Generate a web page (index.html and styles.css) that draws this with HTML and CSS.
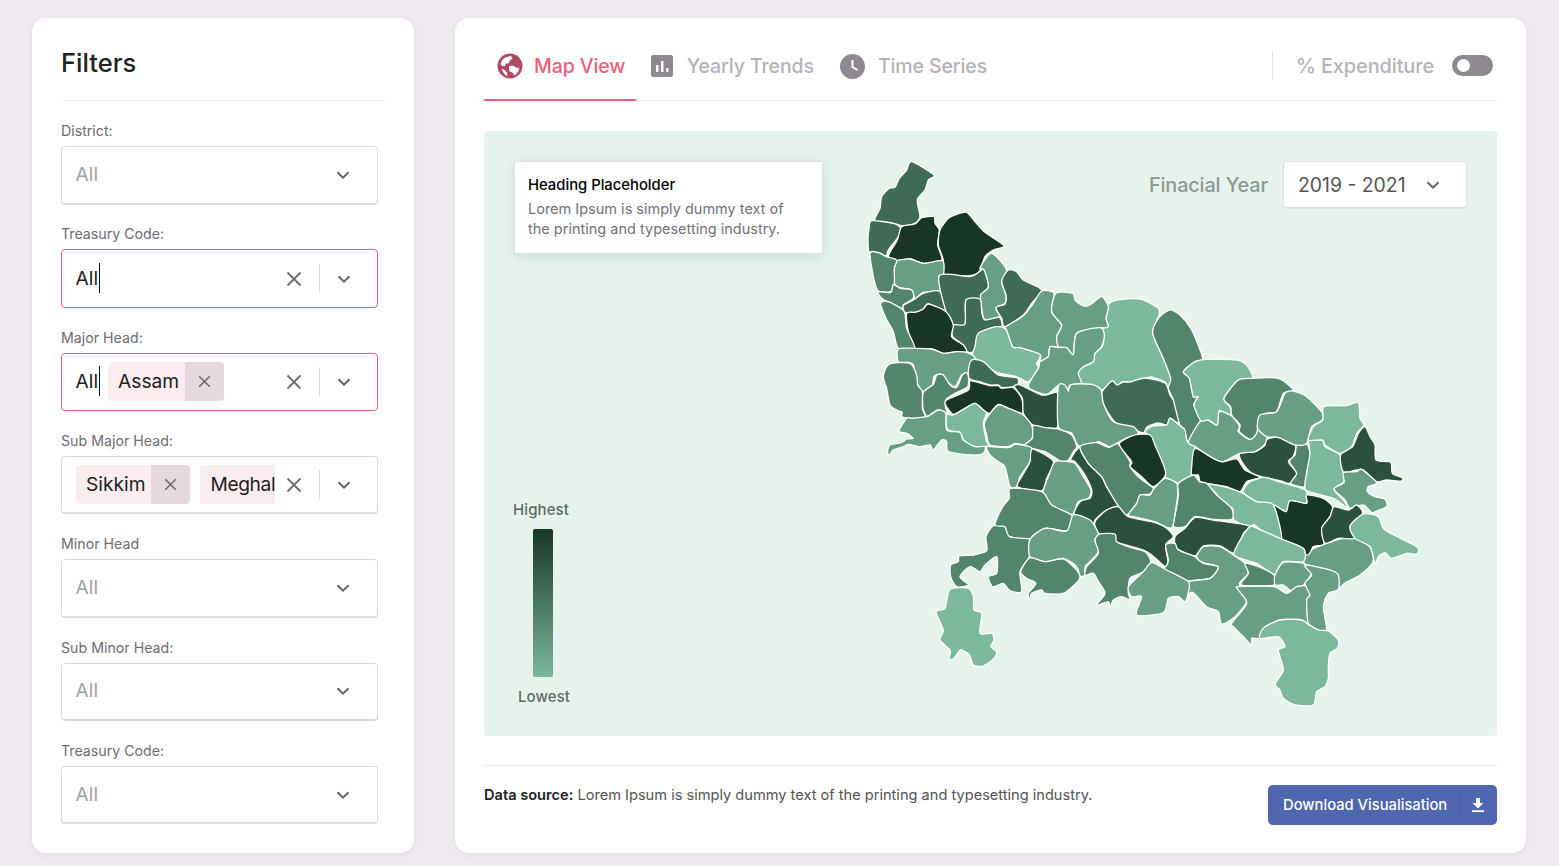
FILE: index.html
```html
<!DOCTYPE html>
<html lang="en">
<head>
    <meta charset="UTF-8">
    <meta name="viewport" content="width=device-width, initial-scale=1.0">
    <title>Expenditure Map</title>
    <link rel="stylesheet" href="styles.css">
</head>
<body>
    <svg class="icon-defs" width="0" height="0">
        <symbol id="chevron" viewBox="0 0 14 14"><path d="M1.5 4.2 7 9.7l5.5-5.5" fill="none" stroke="currentColor" stroke-width="2"/></symbol>
        <symbol id="cross" viewBox="0 0 16 16"><path d="M1.5 1.5l13 13M14.5 1.5l-13 13" fill="none" stroke="currentColor" stroke-width="1.8"/></symbol>
    </svg>

    <aside class="sidebar">
        <h2 class="sidebar-title">Filters</h2>
        <div class="filter-area">
            <div class="filter-list">
                <div class="field">
                    <label>District:</label>
                    <div class="select">
                        <span class="placeholder">All</span>
                        <svg class="chevron"><use href="#chevron"/></svg>
                    </div>
                </div>
                <div class="field">
                    <label>Treasury Code:</label>
                    <div class="select is-active">
                        <div class="select-value"><span class="typed">All</span></div>
                        <svg class="clear"><use href="#cross"/></svg>
                        <i class="select-divider"></i>
                        <svg class="chevron"><use href="#chevron"/></svg>
                    </div>
                </div>
                <div class="field">
                    <label>Major Head:</label>
                    <div class="select is-active">
                        <div class="select-value">
                            <span class="typed">All</span>
                            <span class="chip"><span class="chip-text">Assam</span><span class="chip-remove"><svg><use href="#cross"/></svg></span></span>
                        </div>
                        <svg class="clear"><use href="#cross"/></svg>
                        <i class="select-divider"></i>
                        <svg class="chevron"><use href="#chevron"/></svg>
                    </div>
                </div>
                <div class="field">
                    <label>Sub Major Head:</label>
                    <div class="select">
                        <div class="select-value">
                            <span class="chip"><span class="chip-text">Sikkim</span><span class="chip-remove"><svg><use href="#cross"/></svg></span></span>
                            <span class="chip chip-cut"><span class="chip-text">Meghal</span></span>
                        </div>
                        <svg class="clear"><use href="#cross"/></svg>
                        <i class="select-divider"></i>
                        <svg class="chevron"><use href="#chevron"/></svg>
                    </div>
                </div>
                <div class="field">
                    <label>Minor Head</label>
                    <div class="select">
                        <span class="placeholder">All</span>
                        <svg class="chevron"><use href="#chevron"/></svg>
                    </div>
                </div>
                <div class="field">
                    <label>Sub Minor Head:</label>
                    <div class="select">
                        <span class="placeholder">All</span>
                        <svg class="chevron"><use href="#chevron"/></svg>
                    </div>
                </div>
                <div class="field">
                    <label>Treasury Code:</label>
                    <div class="select">
                        <span class="placeholder">All</span>
                        <svg class="chevron"><use href="#chevron"/></svg>
                    </div>
                </div>
            </div>
            <div class="scroll-thumb"></div>
        </div>
    </aside>

    <main class="content">
        <nav class="tabs">
            <a class="tab tab-map is-current">
                <svg class="tab-icon" viewBox="0 0 26 26">
                    <circle cx="13" cy="13" r="12.500" fill="#b04a62"/>
                    <path d="M7 5.500c2-1.500 5-2.500 7.500-2l1 2.500-3 1.500-.5 2.500-3.500 1-.5 2.500-4-1C3.500 9.500 5 7 7 5.500zM12 13l4-.5 3 2 3.500.5c-.5 3-2.500 6-5 7.500l-2-3-3-1-.5-3zM5 16l3 1 2 3 .5 3c-3-1-5-4-5.500-7z" fill="#fff"/>
                </svg>
                Map View
            </a>
            <a class="tab tab-trends">
                <svg class="tab-icon" viewBox="0 0 22 22">
                    <rect width="22" height="22" rx="2" fill="#8e8991"/>
                    <path d="M5 10h2.500v7H5zM10 6h2.500v11H10zM15 13h2.500v4H15z" fill="#fff"/>
                </svg>
                Yearly Trends
            </a>
            <a class="tab tab-time">
                <svg class="tab-icon" viewBox="0 0 25 25">
                    <circle cx="12.500" cy="12.500" r="12.500" fill="#8e8991"/>
                    <path d="M12.500 6v7l5 3" fill="none" stroke="#fff" stroke-width="2"/>
                </svg>
                Time Series
            </a>
            <div class="tabs-right">
                <span class="toggle-label">% Expenditure</span>
                <span class="toggle"><i></i></span>
            </div>
        </nav>

        <section class="map-panel">
            <svg class="map" viewBox="484 131 1013 605">
                <g>
                    <polygon class="c1" points="1108,305 1117,300 1140,299 1158,308 1159,315 1153,333 1163,358 1171,378 1168,388 1165,382 1150,377 1140,382 1123,382 1117,385 1112,381 1102,390 1092,385 1082,384 1078,373 1083,367 1093,362 1095,353 1102,347 1104,335 1100,328 1108,327 1106,318"/>
                    <polygon class="c4" points="1102,392 1112,381 1117,385 1123,382 1130,382 1145,378 1165,383 1170,395 1175,403 1179,423 1170,418 1167,425 1158,423 1147,427 1143,433 1130,427 1115,422 1102,402"/>
                    <polygon class="c2" points="1305,555 1315,548 1340,539 1355,538 1370,547 1373,562 1360,575 1345,583 1338,589 1338,575 1330,570 1305,564"/>
                </g>
                <g transform="translate(860 155) scale(.33333)">
                    <polygon class="c4" points="155,20 222,60 205,75 195,105 172,135 180,185 165,205 130,213 100,205 45,197 60,160 65,125 88,100 105,97 118,70 140,45"/>
                    <polygon class="c4" points="35,197 100,205 122,220 115,245 85,285 78,303 55,292 28,293 24,250 28,215"/>
                    <polygon class="c6" points="125,215 165,207 185,188 222,185 225,205 238,225 233,270 245,315 190,325 150,312 110,317 85,303 112,255"/>
                    <polygon class="c6" points="240,225 265,190 290,178 320,172 345,200 375,232 432,272 400,285 375,305 358,350 330,362 252,358 250,315 235,270"/>
                    <polygon class="c2" points="395,295 440,345 425,380 438,420 435,445 408,460 418,485 375,495 365,460 362,415 385,395 372,345 360,338"/>
                    <polygon class="c4" points="445,345 470,350 490,375 545,405 515,445 490,480 435,515 425,490 408,458 435,447 438,420 425,378"/>
                    <polygon class="c2" points="110,318 150,312 190,325 248,318 250,360 236,365 240,410 190,412 165,432 155,405 120,398 103,385 103,340"/>
                    <polygon class="c3" points="30,295 55,293 78,305 110,315 103,340 103,385 92,410 55,408 42,375"/>
                    <polygon class="c3" points="55,410 92,412 100,388 120,400 155,405 160,430 130,450 125,460 85,440 65,430"/>
                    <polygon class="c4" points="130,452 160,435 190,415 240,410 258,470 205,447 190,462 165,472 135,472"/>
                    <polygon class="c4" points="238,362 330,365 358,350 372,345 385,395 362,418 360,432 318,435 315,507 280,510 258,470"/>
                    <polygon class="c4" points="318,435 360,432 365,470 375,495 418,487 425,515 390,520 355,550 340,590 320,590 310,570 278,545 280,510 315,507"/>
                    <polygon class="c6" points="140,475 165,472 190,462 205,447 258,470 280,510 275,545 310,570 320,592 290,590 250,595 215,582 165,580 145,530"/>
                    <polygon class="c3" points="62,445 85,440 125,462 135,475 140,520 165,582 115,580 100,530 78,490"/>
                    <polygon class="c1" points="355,535 410,515 440,525 458,575 480,578 540,598 530,625 535,640 505,680 470,665 405,650 340,605 345,575"/>
                    <polygon class="c2" points="435,517 490,482 520,445 545,408 582,415 575,470 605,510 590,545 595,575 570,575 565,605 540,620 540,598 480,578 458,575 440,525"/>
                    <polygon class="c2" points="588,415 638,415 645,435 670,453 690,450 725,425 745,455 738,490 745,515 720,520 650,535 640,598 620,578 595,575 590,545 605,510 575,470"/>
                    <polygon class="c2" points="595,578 620,578 640,598 650,535 720,518 733,540 725,575 705,595 700,620 670,635 655,655 665,688 630,690 620,710 595,692 560,718 505,695 535,640 540,620 565,605 570,575"/>
                    <polygon class="c2" points="115,582 165,580 215,582 250,595 290,590 320,592 345,610 325,655 305,660 285,695 262,680 240,658 222,665 215,700 190,712 170,680 160,630 145,622 115,620"/>
                </g>
                <g transform="translate(875 355) scale(.33333)">
                    <polygon class="c3" points="42,28 105,25 125,60 128,90 142,110 142,160 150,185 110,190 80,185 82,172 65,165 45,150 35,100 25,65"/>
                    <polygon class="c3" points="145,112 175,88 185,60 205,60 225,90 245,97 262,60 278,55 278,95 240,115 212,135 212,160 218,175 190,165 165,180 155,183 144,160"/>
                    <polygon class="c4" points="290,15 325,20 370,60 425,68 430,85 415,95 380,98 370,90 345,90 320,82 285,72 280,50"/>
                    <polygon class="c6" points="285,78 320,85 345,92 370,92 380,100 415,98 440,130 442,175 400,160 370,148 345,175 325,165 300,145 270,160 235,178 212,150 215,135 280,105"/>
                    <polygon class="c5" points="418,95 435,90 500,120 530,115 548,118 548,215 510,218 470,208 445,175 442,130"/>
                    <polygon class="c1" points="218,178 235,180 270,160 300,145 325,165 335,175 325,205 335,260 345,272 300,275 265,255 255,232 220,225 212,195"/>
                    <polygon class="c2" points="345,175 370,150 400,160 442,178 470,210 472,250 450,270 420,265 400,275 345,270 335,240 328,205"/>
                    <polygon class="c2" points="155,185 165,180 190,165 212,175 215,225 255,232 265,255 300,275 330,275 325,295 290,300 220,290 215,260 200,255 175,285 165,270 135,275 100,268 85,275 55,285 42,302 38,290 45,270 80,262 95,252 115,250 95,235 72,228 95,190 110,190"/>
                    <polygon class="c3" points="475,212 510,218 550,222 590,240 605,275 595,290 580,315 560,320 535,305 510,290 450,272 472,250"/>
                    <polygon class="c2" points="550,95 570,90 580,108 590,88 650,88 678,105 685,145 715,200 775,215 790,238 765,245 725,265 710,278 670,260 650,270 610,272 590,235 550,215"/>
                    <polygon class="c2" points="333,275 345,275 400,278 420,268 450,272 470,280 465,320 435,365 425,395 405,395 390,335 370,320 345,300"/>
                    <polygon class="c5" points="472,282 535,318 515,370 500,408 428,395 440,365 465,320"/>
                    <polygon class="c2" points="540,320 580,320 600,325 625,365 648,405 640,430 610,440 600,465 590,478 545,465 505,420 505,405 520,365"/>
                </g>
                <g transform="translate(1130 290) scale(.33333)">
                    <polygon class="c3" points="118,60 150,75 185,120 218,205 195,215 160,245 178,265 190,320 205,320 192,345 212,395 175,455 148,400 130,330 115,295 122,265 100,205 68,130 85,85"/>
                    <polygon class="c1" points="45,425 70,408 110,405 120,385 148,405 165,420 172,455 195,465 185,540 188,575 145,578 105,560 65,450"/>
                    <polygon class="c6" points="195,475 250,505 280,515 320,507 345,540 388,562 350,575 330,605 290,590 230,580 210,575 205,555 185,555 185,530"/>
                    <polygon class="c5" points="330,490 375,485 405,465 403,450 445,442 495,465 490,500 475,515 500,548 495,565 478,580 450,572 395,560 360,545 335,515"/>
                    <polygon class="c3" points="500,468 530,462 540,490 535,530 530,550 525,590 482,580 500,550 478,515 495,495"/>
                    <polygon class="c1" points="537,452 578,452 585,470 630,495 640,545 642,575 612,597 640,630 655,655 610,625 528,600 530,550 540,490"/>
                    <polygon class="c2" points="210,395 235,390 260,405 268,365 305,378 328,408 325,425 360,448 385,420 410,440 403,465 375,485 330,490 280,515 250,505 195,470 175,455"/>
                    <polygon class="c1" points="160,245 195,215 230,208 320,210 350,225 368,265 325,270 282,325 300,350 303,375 268,362 262,405 235,390 212,392 192,345 205,320 190,320 178,265"/>
                    <polygon class="c3" points="368,265 445,265 490,300 460,310 440,365 405,370 385,395 380,430 360,448 328,425 330,405 305,375 302,350 282,325 325,270"/>
                    <polygon class="c2" points="465,310 490,303 530,320 578,370 575,392 545,410 530,460 495,465 445,442 410,440 383,415 390,375 440,365"/>
                    <polygon class="c1" points="582,350 650,347 685,338 690,385 702,405 680,430 665,470 630,490 585,465 578,450 535,450 550,410 578,390"/>
                    <polygon class="c5" points="705,410 720,440 735,465 738,510 782,517 787,550 815,562 815,573 770,570 740,575 700,540 680,540 640,545 632,495 668,470 685,430"/>
                    <polygon class="c2" points="640,548 680,545 695,538 740,578 715,590 712,605 735,620 765,628 770,650 735,665 725,668 700,645 660,655 645,630 612,597 642,578"/>
                    <polygon class="c1" points="340,605 360,575 405,562 445,575 525,600 528,640 480,632 470,665 430,645 375,635"/>
                    <polygon class="c6" points="430,645 468,665 480,632 530,640 530,615 580,625 608,650 600,680 575,715 582,762 550,770 530,795 455,750 440,695"/>
                    <polygon class="c5" points="612,650 655,660 680,645 698,670 660,710 675,745 625,745 585,760 575,715 600,680"/>
                    <polygon class="c1" points="700,672 745,680 765,720 860,770 860,792 830,790 785,805 765,788 745,800 735,820 720,770 675,745 660,708"/>
                    <polygon class="c1" points="230,582 290,592 335,608 380,635 430,645 455,745 420,745 375,705 355,710 310,688 308,655 265,630 258,610"/>
                </g>
                <g transform="translate(1000 420) scale(.33333)">
                    <polygon class="c5" points="240,82 265,130 305,170 320,200 355,258 320,270 285,300 278,330 262,310 250,295 222,282 240,245 270,235 275,210 255,165 225,125 212,118"/>
                    <polygon class="c3" points="240,80 290,68 325,82 355,72 390,125 390,140 420,175 460,205 450,222 420,225 410,250 380,285 355,258 320,200 305,170 265,130"/>
                    <polygon class="c6" points="358,72 405,45 450,45 465,75 497,160 460,200 425,170 390,140 395,125"/>
                    <polygon class="c3" points="535,190 580,165 598,185 620,190 650,225 695,265 695,298 640,298 585,290 555,320 520,318 530,262 535,225"/>
                    <polygon class="c2" points="385,285 410,250 420,225 450,225 462,205 495,175 530,190 533,225 528,262 518,320 500,322 465,305 410,292"/>
                    <polygon class="c5" points="355,260 385,290 465,308 500,325 520,350 497,375 505,430 495,440 455,405 430,390 345,365 340,342 295,340 285,305 320,270"/>
                    <polygon class="c5" points="585,293 640,300 750,318 730,340 705,400 660,378 610,378 585,408 530,385 525,350 555,325"/>
                    <polygon class="c3" points="525,370 535,390 585,410 610,430 655,440 630,475 570,482 550,485 480,450 497,440 505,420 497,375"/>
                    <polygon class="c1" points="750,320 765,322 840,355 910,385 910,425 850,425 825,465 770,430 702,405 730,345"/>
                    <polygon class="c2" points="610,380 660,380 700,405 735,430 745,460 718,492 742,540 705,590 665,612 655,575 620,560 580,518 565,520 565,485 630,475 655,440 610,428 590,410"/>
                    <polygon class="c3" points="735,430 775,440 822,465 822,495 725,495 745,460"/>
                    <polygon class="c2" points="850,428 910,430 935,455 915,490 880,515 850,495 825,495 825,465"/>
                </g>
                <g transform="translate(930 430) scale(.33333)">
                    <polygon class="c2" points="925,470 1030,470 1070,490 1100,470 1135,470 1140,500 1130,510 1135,580 1110,568 1050,570 1010,595 990,625 965,625 965,645 940,620 910,590 905,580 950,520 925,480"/>
                    <polygon class="c2" points="1125,405 1200,420 1225,435 1225,478 1195,490 1180,530 1190,600 1165,600 1135,580 1130,510 1140,495 1125,460 1145,435"/>
                    <polygon class="c1" points="1000,595 1050,570 1115,570 1135,583 1165,600 1195,603 1225,630 1222,655 1200,670 1195,710 1195,745 1185,770 1160,785 1150,825 1095,825 1060,805 1050,780 1035,762 1060,720 1045,660 1065,650 1045,620 990,625"/>
                    <polygon class="c1" points="60,478 115,475 130,500 132,540 155,550 150,610 185,610 192,630 182,650 200,665 192,685 160,708 130,705 118,675 92,660 72,685 58,687 60,660 30,630 40,600 18,545 45,535"/>
                    <polygon class="c3" points="190,287 225,290 240,320 298,325 298,380 270,425 275,485 240,482 220,460 195,470 185,468 175,440 200,430 200,380 165,405 150,425 120,410 90,440 115,465 80,470 62,440 62,405 85,395 88,378 130,375 170,362 168,320"/>
                    <polygon class="c3" points="242,175 335,185 365,225 425,255 425,290 410,303 345,295 320,325 240,320 225,290 195,285 215,235 238,205"/>
                    <polygon class="c2" points="300,328 345,295 410,303 430,255 480,270 505,310 495,330 505,365 480,395 465,410 465,435 450,438 440,410 400,385 345,395 300,380"/>
                    <polygon class="c3" points="300,383 345,395 400,387 435,415 450,440 440,458 400,490 345,490 335,480 305,490 298,510 295,490 318,460 290,445 272,425"/>
                    <polygon class="c3" points="510,312 555,312 560,335 600,352 645,365 662,395 640,425 600,445 595,490 600,510 575,500 550,510 540,532 535,515 500,525 525,490 505,455 490,430 465,435 470,410 505,370 495,330"/>
                    <polygon class="c2" points="665,398 710,420 775,455 775,488 765,515 745,500 715,505 700,548 620,555 635,500 605,500 595,470 640,425"/>
                </g>
            </svg>

            <div class="map-left">
                <div class="info-card">
                    <h4>Heading Placeholder</h4>
                    <p>Lorem Ipsum is simply dummy text of the printing and typesetting industry.</p>
                </div>
                <div class="legend">
                    <span>Highest</span>
                    <div class="legend-bar"></div>
                    <span class="legend-low">Lowest</span>
                </div>
            </div>

            <div class="year-picker">
                <span class="year-label">Finacial Year</span>
                <div class="year-select">
                    <span>2019 - 2021</span>
                    <svg class="chevron"><use href="#chevron"/></svg>
                </div>
            </div>
        </section>

        <footer class="content-footer">
            <p><strong>Data source:</strong> Lorem Ipsum is simply dummy text of the printing and typesetting industry.</p>
            <button class="download-btn">
                <span>Download Visualisation</span>
                <i class="btn-divider"></i>
                <svg viewBox="0 0 12 14"><path d="M4 0h4v5h3.500L6 10.500.5 5H4zM0 12.200h12V14H0z" fill="#fff"/></svg>
            </button>
        </footer>
    </main>
    <script>
        // round off the district outlines
        document.querySelectorAll('.map polygon').forEach(poly => {
            const pts = poly.getAttribute('points').trim().split(/\s+/).map(p => p.split(',').map(Number));
            const n = pts.length;
            let d = `M${pts[0][0]} ${pts[0][1]}`;
            pts.forEach((p, i) => {
                const prev = pts[(i - 1 + n) % n], next = pts[(i + 1) % n], after = pts[(i + 2) % n];
                d += `C${p[0] + (next[0] - prev[0]) / 8} ${p[1] + (next[1] - prev[1]) / 8} ${next[0] - (after[0] - p[0]) / 8} ${next[1] - (after[1] - p[1]) / 8} ${next[0]} ${next[1]}`;
            });
            const path = document.createElementNS('http://www.w3.org/2000/svg', 'path');
            path.setAttribute('class', poly.getAttribute('class'));
            path.setAttribute('d', d + 'Z');
            poly.replaceWith(path);
        });
    </script>
</body>
</html>
```

FILE: styles.css
```css
* { box-sizing: border-box; }
html, body { height: 100%; }
body { font-family: Inter, "Noto Sans", sans-serif; margin: 0; padding: 18px 33px 13px 32px; background-color: #efeaf0; color: #222; display: flex; gap: 41px; overflow: hidden; }
.icon-defs { position: absolute; }

/* sidebar */
.sidebar { width: 382px; flex: none; background: white; border-radius: 14px; padding: 0 29px; box-shadow: 0 1px 5px rgba(80, 60, 90, 0.1); }
.sidebar-title { margin: 0; height: 83px; border-bottom: 1px solid #f0eef1; font-size: 25.5px; font-weight: 500; line-height: 90px; color: #222; }
.filter-area { display: flex; margin-top: 22px; }
.filter-list { width: 317px; flex: none; display: flex; flex-direction: column; gap: 21.83px; }
.scroll-thumb { width: 7px; height: 580px; margin: 23px 0 0 20px; background: #f1eef2; border-radius: 3px; }
.field label { display: block; height: 17px; margin-bottom: 6px; font-size: 14.2px; line-height: 15px; color: #6f6c72; }

.select { height: 58.5px; display: flex; align-items: center; padding: 0 27px 0 14px; background: white; border: 1px solid #dcdadd; border-bottom-width: 2px; border-radius: 4px; font-size: 19.2px; }
.select.is-active { border: 1px solid #ea5f7f; }
.placeholder { color: #a3a1a6; margin: 0 0 2px -0.5px; }
.select-value { width: 199px; flex: none; display: flex; align-items: center; gap: 9px; overflow: hidden; white-space: nowrap; }
.typed { color: #222; padding-right: 1px; border-right: 1px solid #111; line-height: 30px; margin: 0 -1px 2px -0.5px; }
.chip { display: flex; flex: none; height: 39px; background: #fbecef; border-radius: 4px; color: #222; }
.chip-text { padding: 0 6px 0 10px; line-height: 38px; }
.chip-remove { width: 39px; display: flex; align-items: center; justify-content: center; background: #e6d9dd; border-radius: 0 4px 4px 0; color: #6a666c; }
.chip-remove svg { width: 13px; height: 13px; }
.chip-cut { flex: 0 0 75px; margin-left: 1px; border-radius: 4px 0 0 4px; letter-spacing: -0.4px; }
.clear { width: 16px; height: 16px; flex: none; margin-left: 11px; color: #6f6c72; }
.select-divider { width: 1px; height: 29px; flex: none; margin: 0 17px; background: #dcdadd; }
.chevron { width: 14px; height: 14px; flex: none; margin-left: auto; color: #666369; }
.select-divider + .chevron { margin-left: 0; }

/* main */
.content { flex: 1; min-width: 0; background: white; border-radius: 14px; padding: 0 29px; box-shadow: 0 1px 5px rgba(80, 60, 90, 0.1); display: flex; flex-direction: column; }
.tabs { height: 83px; flex: none; display: flex; border-bottom: 1px solid #f0eef1; }
.tab { height: 83px; display: flex; align-items: center; padding: 15px 13px 0; font-size: 19.5px; font-weight: 500; color: #b5b2b8; border-bottom: 2px solid transparent; letter-spacing: -0.1px; }
.tab.is-current { color: #ee5e7f; border-bottom-color: #ee5e7f; }
.tab-icon { flex: none; }
.tab-map { gap: 11px; padding-right: 11px; margin-right: 1.4px; }
.tab-map .tab-icon { width: 26px; height: 26px; }
.tab-trends { gap: 14px; }
.tab-trends .tab-icon { width: 22px; height: 22px; }
.tab-time { gap: 13px; }
.tab-time .tab-icon { width: 25px; height: 25px; }
.tabs-right { margin-left: auto; height: 29px; margin-top: 33px; padding: 0 4px 0 23px; border-left: 1px solid #e3e1e4; display: flex; align-items: center; gap: 18px; }
.toggle-label { font-size: 20px; font-weight: 500; color: #b5b2b8; letter-spacing: -0.15px; }
.toggle { width: 41px; height: 21px; padding: 4px 5px; background: #8e8991; border-radius: 11px; }
.toggle i { display: block; width: 13px; height: 13px; background: white; border-radius: 50%; }

.map-panel { position: relative; height: 605px; flex: none; margin-top: 30px; padding: 30px 30px 31px 30px; background: #e5f3ec; border-radius: 4px; display: flex; justify-content: space-between; }
.map { position: absolute; top: 0; left: 0; width: 100%; height: 100%; }
.map polygon, .map path { stroke: white; stroke-width: 1.3; stroke-linejoin: round; vector-effect: non-scaling-stroke; }
.c1 { fill: #7bb89c; }
.c2 { fill: #679e84; }
.c3 { fill: #53846c; }
.c4 { fill: #3f6b56; }
.c5 { fill: #2b513e; }
.c6 { fill: #183626; }

.map-left { position: relative; display: flex; flex-direction: column; justify-content: space-between; }
.info-card { width: 309px; height: 93px; padding: 14px 13px; background: white; border: 1px solid #dfdfdf; border-radius: 2px; box-shadow: 0 3px 12px rgba(60, 90, 75, 0.14); }
.info-card h4 { margin: 0 0 5px; font-size: 14.8px; font-weight: 500; line-height: 18px; color: #000; }
.info-card p { margin: 0; font-size: 14.5px; line-height: 20px; color: #74717a; }
.legend { display: flex; flex-direction: column; width: 58px; margin-left: -1px; font-size: 15px; font-weight: 500; letter-spacing: 0.1px; line-height: 17px; color: #5e6b65; }
.legend-bar { width: 20px; height: 148px; margin: 11px 0 11px 20px; background: linear-gradient(#183626, #7bb89c); border-radius: 2px; }
.legend-low { padding-left: 5px; }

.year-picker { position: relative; height: 48px; display: flex; align-items: center; gap: 15px; }
.year-label { font-size: 19.8px; font-weight: 500; color: #8a9a92; letter-spacing: -0.1px; }
.year-select { width: 184px; height: 48px; display: flex; align-items: center; padding: 0 26px 0 14px; background: white; border: 1px solid #dfdfdf; border-bottom-width: 2px; border-radius: 4px; font-size: 19.4px; color: #555; }

.content-footer { margin-top: 29px; padding-top: 19px; border-top: 1px solid #f0eef1; display: flex; justify-content: space-between; }
.content-footer p { margin: 0; font-size: 14.6px; line-height: 20px; color: #555; }
.content-footer strong { font-weight: 600; color: #222; }
.download-btn { width: 229px; height: 40px; display: flex; align-items: center; padding: 0 13px 1px 15px; background: #4e67ae; border: 0; border-radius: 5px; font-family: inherit; font-size: 14.75px; font-weight: 500; color: white; white-space: nowrap; }
.btn-divider { width: 1px; height: 19px; flex: none; margin: 0 auto; background: #445a9a; }
.download-btn svg { width: 12px; height: 14px; flex: none; }
```
